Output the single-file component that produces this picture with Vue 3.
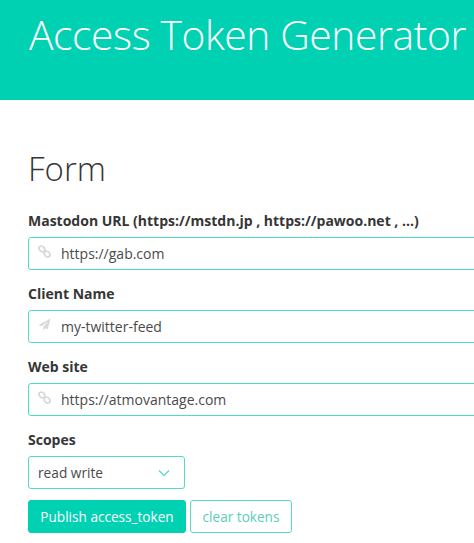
<script setup>
const fields = [
  { label: "Mastodon URL (https://mstdn.jp , https://pawoo.net , ...)", value: "https://gab.com", icon: "link" },
  { label: "Client Name", value: "my-twitter-feed", icon: "plane" },
  { label: "Web site", value: "https://atmovantage.com", icon: "link" },
];
</script>

<template>
  <div class="page">
    <header class="hero">
      <h1 class="hero__title">Access Token Generator</h1>
    </header>

    <section class="content">
      <h2 class="content__title">Form</h2>

      <form class="form" @submit.prevent>
        <div v-for="field in fields" :key="field.label" class="field">
          <label class="field__label">{{ field.label }}</label>
          <div class="control">
            <svg v-if="field.icon === 'link'" class="control__icon" viewBox="0 0 14 14">
              <g fill="none" stroke="#d9d9d9" stroke-width="1.9">
                <ellipse cx="4.2" cy="4.2" rx="3.4" ry="2.7" transform="rotate(45 4.2 4.2)" />
                <ellipse cx="9.8" cy="9.8" rx="3.4" ry="2.7" transform="rotate(45 9.8 9.8)" />
              </g>
            </svg>
            <svg v-else class="control__icon" viewBox="0 0 14 14">
              <path d="M13.5 0.5 L0.5 7.5 L4 9 L11 3.5 L5.5 10 L5.5 13.5 L7.6 11 L10.5 12.2 Z" fill="#d9d9d9" />
            </svg>
            <input class="control__input" type="text" :value="field.value" />
          </div>
        </div>

        <div class="field">
          <label class="field__label">Scopes</label>
          <div class="select">
            <span>read write</span>
            <svg class="select__arrow" viewBox="0 0 12 8">
              <path d="M1 1.5 L6 6.5 L11 1.5" fill="none" stroke="#5ddcc8" stroke-width="1.3" />
            </svg>
          </div>
        </div>

        <div class="buttons">
          <button class="btn btn--primary" type="button">Publish access_token</button>
          <button class="btn btn--outline" type="button">clear tokens</button>
        </div>
      </form>
    </section>
  </div>
</template>

<style>
html,
body {
  margin: 0;
  background: #fff;
  overflow: hidden;
}
</style>

<style scoped>
.page {
  width: 474px;
  height: 543px;
  overflow: hidden;
  font-family: "Open Sans", "Noto Sans", sans-serif;
  color: #363636;
}

.hero {
  height: 100px;
  box-sizing: border-box;
  padding: 7px 0 0 29px;
  background: #00d1b2;
}

.hero__title {
  margin: 0;
  font-size: 40.8px;
  font-weight: 300;
  line-height: 54px;
  letter-spacing: -0.4px;
  color: #fff;
  white-space: nowrap;
}

.content {
  padding: 47px 0 0 28px;
}

.content__title {
  margin: 0 0 19px;
  font-size: 33px;
  font-weight: 300;
  line-height: 44px;
  color: #363636;
}

.field {
  margin-bottom: 13px;
}

.field__label {
  display: block;
  height: 22px;
  margin-bottom: 5px;
  font-size: 14px;
  font-weight: 700;
  line-height: 22px;
  white-space: nowrap;
}

.control {
  display: flex;
  align-items: center;
  width: 480px;
  height: 33px;
  box-sizing: border-box;
  border: 1px solid #4fdcc5;
  border-radius: 3px;
  background: #fff;
}

.control__icon {
  flex: none;
  width: 13px;
  height: 13px;
  margin: 0 10px 4px 9px;
}

.control__input {
  flex: 1;
  min-width: 0;
  padding: 0;
  border: 0;
  outline: 0;
  font: inherit;
  font-size: 14px;
  color: #4a4a4a;
  background: transparent;
}

.select {
  display: flex;
  align-items: center;
  justify-content: space-between;
  width: 157px;
  height: 33px;
  box-sizing: border-box;
  padding: 0 14px 0 9px;
  border: 1px solid #4fdcc5;
  border-radius: 3px;
  font-size: 13.7px;
  color: #4a4a4a;
}

.select__arrow {
  width: 12px;
  height: 8px;
}

.buttons {
  display: flex;
  gap: 4px;
  margin-top: -2px;
}

.btn {
  height: 33px;
  box-sizing: border-box;
  padding: 0;
  border-radius: 3px;
  font: inherit;
  font-size: 13.6px;
  white-space: nowrap;
}

.btn--primary {
  width: 158px;
  border: 1px solid #00d1b2;
  background: #00d1b2;
  color: #fff;
}

.btn--outline {
  width: 102px;
  border: 1px solid #4fdcc5;
  background: #fff;
  color: #5ccdb9;
}
</style>
